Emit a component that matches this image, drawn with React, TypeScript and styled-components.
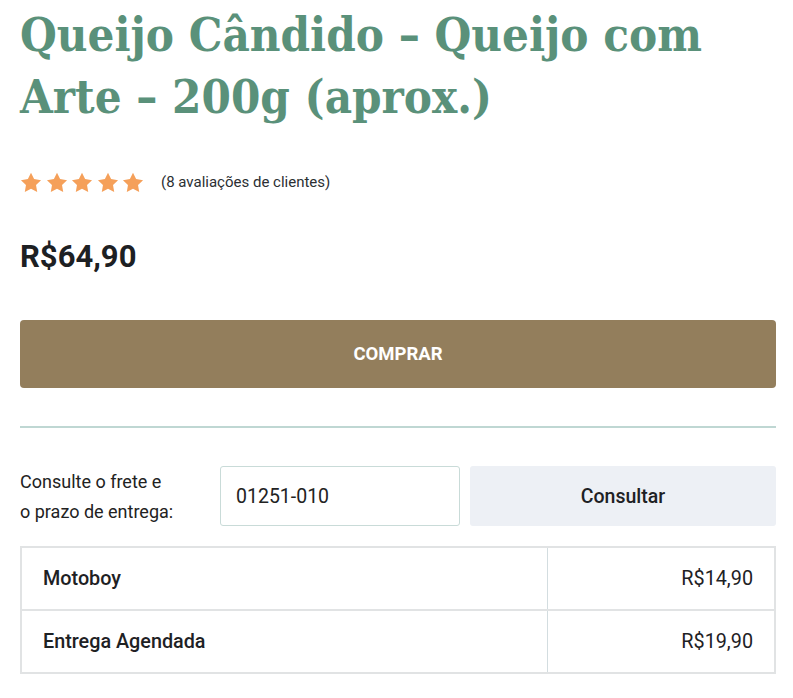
import React from "react";
import styled, { createGlobalStyle } from "styled-components";

const GlobalStyle = createGlobalStyle`
  body {
    margin: 0;
    background: #ffffff;
    font-family: Roboto, "Liberation Sans", sans-serif;
    color: #1f2326;
  }
`;

const Page = styled.div`
  padding: 0 17px 0 20px;
  display: flex;
  flex-direction: column;
`;

const Title = styled.h1`
  margin: 4px 0 0;
  font-family: "DejaVu Serif Condensed", "DejaVu Serif", serif;
  font-stretch: condensed;
  font-weight: 700;
  font-size: 47px;
  line-height: 62px;
  color: #5a917a;
`;

const Rating = styled.div`
  display: flex;
  align-items: center;
  margin-top: 42px;
  height: 24px;
`;

const Stars = styled.div`
  display: flex;
  gap: 3.5px;
  margin-right: 17px;
`;

const Reviews = styled.span`
  font-size: 15px;
  color: #2b2f33;
`;

const Price = styled.div`
  margin-top: 46px;
  font-size: 31px;
  font-weight: 700;
  color: #1d2023;
  line-height: 34px;
`;

const BuyButton = styled.button`
  margin-top: 46px;
  height: 68px;
  border: none;
  border-radius: 4px;
  background: #937e5c;
  color: #ffffff;
  font-family: Roboto, sans-serif;
  font-weight: 700;
  font-size: 18.5px;
  text-transform: uppercase;
`;

const Divider = styled.hr`
  margin: 38px 0 0;
  border: none;
  border-top: 2px solid #bfd7d3;
`;

const ShippingRow = styled.div`
  display: grid;
  grid-template-columns: 190px 240px 1fr;
  gap: 10px;
  margin-top: 37px;
  align-items: center;
`;

const ShipLabel = styled.div`
  font-size: 18px;
  line-height: 30px;
  color: #222;
  padding-top: 2px;
`;

const ZipInput = styled.input`
  height: 60px;
  box-sizing: border-box;
  border: 1px solid #c9dbd8;
  border-radius: 3px;
  padding: 0 15px;
  font-family: Roboto, sans-serif;
  font-size: 19.5px;
  color: #222;
  outline: none;
`;

const CheckButton = styled.button`
  height: 60px;
  border: none;
  border-radius: 3px;
  background: #edf0f5;
  font-family: Roboto, sans-serif;
  font-weight: 500;
  font-size: 19.5px;
  color: #1e2124;
`;

const Table = styled.table`
  margin-top: 19px;
  border-collapse: collapse;
  border: 2px solid #e1e3e4;
  width: 100%;
`;

const Cell = styled.td<{ $right?: boolean }>`
  height: 61px;
  padding: 0 21px;
  font-size: 19.8px;
  font-weight: ${(p) => (p.$right ? 400 : 500)};
  text-align: ${(p) => (p.$right ? "right" : "left")};
  width: ${(p) => (p.$right ? "184px" : "auto")};
  border-top: 2px solid #e1e3e4;
  border-left: ${(p) => (p.$right ? "1px solid #d3dde0" : "none")};
  color: #1e2124;
`;

const Star = () => (
  <svg width="22" height="21" viewBox="0 0 24 23">
    <path
      d="M12 0.8l3.4 7 7.6 1.1-5.5 5.4 1.3 7.6L12 18.3l-6.8 3.6 1.3-7.6L1 8.9l7.6-1.1z"
      fill="#f5a05a"
    />
  </svg>
);

const rates = [
  { name: "Motoboy", price: "R$14,90" },
  { name: "Entrega Agendada", price: "R$19,90" },
];

export default function App() {
  return (
    <Page>
      <GlobalStyle />
      <Title>Queijo Cândido – Queijo com Arte – 200g (aprox.)</Title>
      <Rating>
        <Stars>
          {[0, 1, 2, 3, 4].map((i) => (
            <Star key={i} />
          ))}
        </Stars>
        <Reviews>(8 avaliações de clientes)</Reviews>
      </Rating>
      <Price>R$64,90</Price>
      <BuyButton>Comprar</BuyButton>
      <Divider />
      <ShippingRow>
        <ShipLabel>
          Consulte o frete e
          <br />o prazo de entrega:
        </ShipLabel>
        <ZipInput defaultValue="01251-010" />
        <CheckButton>Consultar</CheckButton>
      </ShippingRow>
      <Table>
        <tbody>
          {rates.map((r) => (
            <tr key={r.name}>
              <Cell>{r.name}</Cell>
              <Cell $right>{r.price}</Cell>
            </tr>
          ))}
        </tbody>
      </Table>
    </Page>
  );
}
